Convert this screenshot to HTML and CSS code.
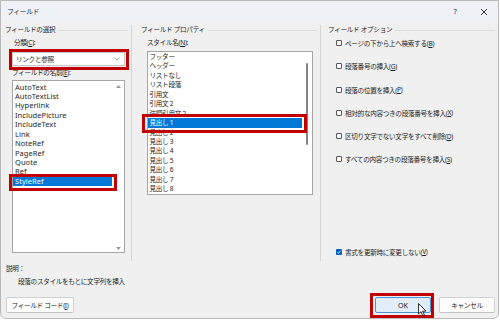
FILE: index.html
```html
<!DOCTYPE html>
<html lang="ja">
<head>
    <meta charset="UTF-8">
    <meta name="viewport" content="width=device-width, initial-scale=1.0">
    <title>フィールド</title>
    <link rel="stylesheet" href="styles.css">
</head>
<body>
    <div class="window">
        <div class="titlebar">
            <span class="title">フィールド</span>
            <span class="tb-btn help">?</span>
            <span class="tb-btn close">
                <svg width="8" height="8" viewBox="0 0 8 8"><path d="M1 1L7 7M7 1L1 7" stroke="#1b1b1b" stroke-width="0.9" fill="none"/></svg>
            </span>
        </div>

        <div class="dialog-body">
            <div class="groups">
                <section class="group g-select">
                    <div class="group-title"><span>フィールドの選択</span></div>
                    <div class="group-inner">
                        <div class="lbl lbl-cat">分類(<u>C</u>):</div>
                        <div class="combo">
                            <span>リンクと参照</span>
                            <svg width="6" height="4" viewBox="0 0 6 4"><path d="M0.5 0.8L3 3.2L5.5 0.8" stroke="#777" stroke-width="0.8" fill="none"/></svg>
                        </div>
                        <div class="lbl lbl-name">フィールドの名前(<u>E</u>):</div>
                        <div class="listbox names">
                            <ul class="items latin">
                                <li>AutoText</li>
                                <li>AutoTextList</li>
                                <li>Hyperlink</li>
                                <li>IncludePicture</li>
                                <li>IncludeText</li>
                                <li>Link</li>
                                <li>NoteRef</li>
                                <li>PageRef</li>
                                <li>Quote</li>
                                <li>Ref</li>
                                <li class="selected">StyleRef</li>
                            </ul>
                            <div class="vscroll arrows">
                                <svg width="5" height="3" viewBox="0 0 5 3"><path d="M0 3L2.5 0L5 3Z" fill="#9a9a9a"/></svg>
                                <svg width="5" height="3" viewBox="0 0 5 3"><path d="M0 0L2.5 3L5 0Z" fill="#9a9a9a"/></svg>
                            </div>
                        </div>
                    </div>
                </section>

                <section class="group g-props">
                    <div class="group-title"><span>フィールド プロパティ</span></div>
                    <div class="group-inner">
                        <div class="lbl">スタイル名(<u>N</u>):</div>
                        <div class="listbox styles">
                            <ul class="items">
                                <li>フッター</li>
                                <li>ヘッダー</li>
                                <li>リストなし</li>
                                <li>リスト段落</li>
                                <li>引用文</li>
                                <li>引用文 2</li>
                                <li>強調引用文 2</li>
                                <li class="selected">見出し 1</li>
                                <li>見出し 2</li>
                                <li>見出し 3</li>
                                <li>見出し 4</li>
                                <li>見出し 5</li>
                                <li>見出し 6</li>
                                <li>見出し 7</li>
                                <li>見出し 8</li>
                            </ul>
                            <div class="vscroll thin">
                                <div class="thumb"></div>
                            </div>
                        </div>
                    </div>
                </section>

                <section class="group g-options">
                    <div class="group-title"><span>フィールド オプション</span></div>
                    <div class="options">
                        <div class="check"><span class="box"></span>ページの下から上へ検索する(<u>B</u>)</div>
                        <div class="check"><span class="box"></span>段落番号の挿入(<u>G</u>)</div>
                        <div class="check"><span class="box"></span>段落の位置を挿入(<u>P</u>)</div>
                        <div class="check"><span class="box"></span>相対的な内容つきの段落番号を挿入(<u>X</u>)</div>
                        <div class="check"><span class="box"></span>区切り文字でない文字をすべて削除(<u>D</u>)</div>
                        <div class="check"><span class="box"></span>すべての内容つきの段落番号を挿入(<u>S</u>)</div>
                        <div class="check checked">
                            <span class="box"><svg width="6" height="6" viewBox="0 0 6 6"><path d="M1.2 3.1L2.5 4.3L4.9 1.6" stroke="#fff" stroke-width="0.8" fill="none"/></svg></span>書式を更新時に変更しない(<u>V</u>)
                        </div>
                    </div>
                </section>
            </div>

            <div class="desc-label">説明：</div>
            <div class="desc-text">段落のスタイルをもとに文字列を挿入</div>

            <div class="footer">
                <button class="btn btn-code">フィールド コード(<u>I</u>)</button>
                <button class="btn btn-ok">OK</button>
                <button class="btn btn-cancel">キャンセル</button>
            </div>
        </div>

        <!-- 注釈の赤枠 -->
        <div class="mark mark-combo"></div>
        <div class="mark mark-styleref"></div>
        <div class="mark mark-heading"></div>
        <div class="mark mark-ok"></div>

        <svg class="cursor" width="9" height="14" viewBox="0 0 9 14">
            <path d="M0.5 0.5L0.5 11L3 8.6L4.8 12.8L6.4 12.1L4.7 8.1L8 8.1Z" fill="#fff" stroke="#000" stroke-width="0.8" stroke-linejoin="round"/>
        </svg>
    </div>
</body>
</html>
```

FILE: styles.css
```css
* {
    box-sizing: border-box;
}
body {
    margin: 0;
    background: #fff;
    font-family: "Noto Sans", "Noto Sans CJK JP", sans-serif;
    font-size: 6.6px;
    letter-spacing: -0.3px;
    color: #1b1b1b;
}
u {
    text-decoration: underline;
    text-underline-offset: 1px;
}
.window {
    position: relative;
    width: 499px;
    height: 319px;
    background: #f0f0f0;
    border: 1px solid #b9b9b9;
    border-radius: 0 0 6px 6px;
    overflow: hidden;
}
.titlebar {
    height: 20px;
    display: flex;
    align-items: center;
    padding: 0 9px 1px 6px;
    background: #eef2f7;
}
.title {
    font-size: 6.8px;
}
.tb-btn {
    width: 10px;
    text-align: center;
    font-size: 7px;
    margin-top: 2px;
}
.help {
    margin-left: auto;
}
.close {
    margin-left: 19px;
    display: flex;
    justify-content: center;
}
.dialog-body {
    padding: 4px 0 0 4px;
}
.groups {
    display: flex;
    height: 236px;
}
.group {
    display: flex;
    flex-direction: column;
}
.g-select {
    width: 127px;
    border-right: 1px solid #d4d4d4;
}
.g-props {
    width: 189px;
    padding-left: 9px;
    border-right: 1px solid #d4d4d4;
}
.g-options {
    flex: 1;
    padding-left: 7px;
}
.group-title {
    display: flex;
    align-items: center;
    height: 9px;
    line-height: 9px;
    white-space: nowrap;
}
.group-title::after {
    content: "";
    flex: 1;
    border-top: 1px solid #dadada;
    margin: 1px 3px 0 3px;
}
.g-select .group-inner {
    padding-left: 7px;
}
.g-props .group-inner {
    padding-left: 6px;
}
.lbl {
    line-height: 10px;
    margin-top: 4px;
}
.lbl-cat {
    padding-left: 2px;
}
.lbl-name {
    margin-top: 2px;
}
.combo {
    width: 113px;
    height: 14px;
    margin-top: 3.5px;
    display: flex;
    align-items: center;
    justify-content: space-between;
    padding: 0 4px 0 3px;
    background: #fff;
    border: 1px solid #c8c8c8;
}
.listbox {
    display: flex;
    background: #fff;
    border: 1px solid #a6a6a6;
    overflow: hidden;
}
.listbox.names {
    width: 113px;
    height: 173px;
    margin-top: 2.5px;
}
.listbox.styles {
    width: 166px;
    height: 144.5px;
    margin-top: 2.5px;
}
.items {
    list-style: none;
    margin: 0;
    padding: 0;
    flex: 1;
}
.items li {
    height: 9.45px;
    line-height: 9.45px;
    white-space: nowrap;
}
.items.latin {
    font-size: 7.5px;
    letter-spacing: 0.05px;
    padding-top: 1.5px;
}
.items.latin li {
    padding-left: 2px;
    color: #262626;
}
.styles .items {
    padding-top: 0.5px;
}
.styles .items li {
    padding-left: 1.5px;
}
.items li.selected {
    background: #0078d7;
    color: #fff;
}
.vscroll.arrows {
    width: 12px;
    display: flex;
    flex-direction: column;
    justify-content: space-between;
    align-items: center;
    padding: 4px 0 2.5px;
}
.vscroll.thin {
    width: 10px;
    padding: 11.2px 0 0 4px;
}
.thumb {
    width: 2px;
    height: 82px;
    border-radius: 1px;
    background: #858585;
}
.options {
    display: flex;
    flex-direction: column;
    flex: 1;
    padding: 0 0 4.3px 8px;
}
.check {
    display: flex;
    align-items: center;
    height: 10px;
    margin-top: 13.2px;
    white-space: nowrap;
}
.check:first-child {
    margin-top: 4.3px;
}
.check.checked {
    margin-top: auto;
}
.box {
    width: 6px;
    height: 6px;
    margin-right: 3px;
    border: 0.8px solid #555;
    border-radius: 1px;
    background: #fff;
    display: flex;
}
.checked .box {
    border: none;
    background: #005fb8;
}
.desc-label {
    margin-top: 3px;
    line-height: 10px;
    padding-left: 1px;
}
.desc-text {
    margin-top: 3px;
    line-height: 10px;
    padding-left: 13px;
}
.footer {
    display: flex;
    gap: 8px;
    margin-top: 10.3px;
    padding-right: 3px;
}
.btn {
    height: 16px;
    padding: 0;
    font-family: inherit;
    font-size: 6.6px;
    letter-spacing: -0.3px;
    color: #1b1b1b;
    background: #fdfdfd;
    border: 1px solid #d0d0d0;
    border-bottom-color: #c2c2c2;
    border-radius: 2px;
}
.btn-code {
    width: 68px;
    margin-left: 1px;
}
.btn-ok {
    width: 56px;
    margin-left: auto;
    font-size: 7.2px;
    letter-spacing: 0;
    background: #e1eefa;
    border-color: #4d8fd6;
}
.btn-cancel {
    width: 56px;
}
.mark {
    position: absolute;
    border: 3px solid #c00000;
}
.mark-combo {
    left: 8px;
    top: 47.5px;
    width: 120px;
    height: 21.5px;
}
.mark-styleref {
    left: 8px;
    top: 172.5px;
    width: 108px;
    height: 17.5px;
}
.mark-heading {
    left: 140.7px;
    top: 113px;
    width: 165px;
    height: 18.7px;
}
.mark-ok {
    left: 369px;
    top: 292.3px;
    width: 64px;
    height: 24.5px;
}
.cursor {
    position: absolute;
    left: 417px;
    top: 302px;
}
```
